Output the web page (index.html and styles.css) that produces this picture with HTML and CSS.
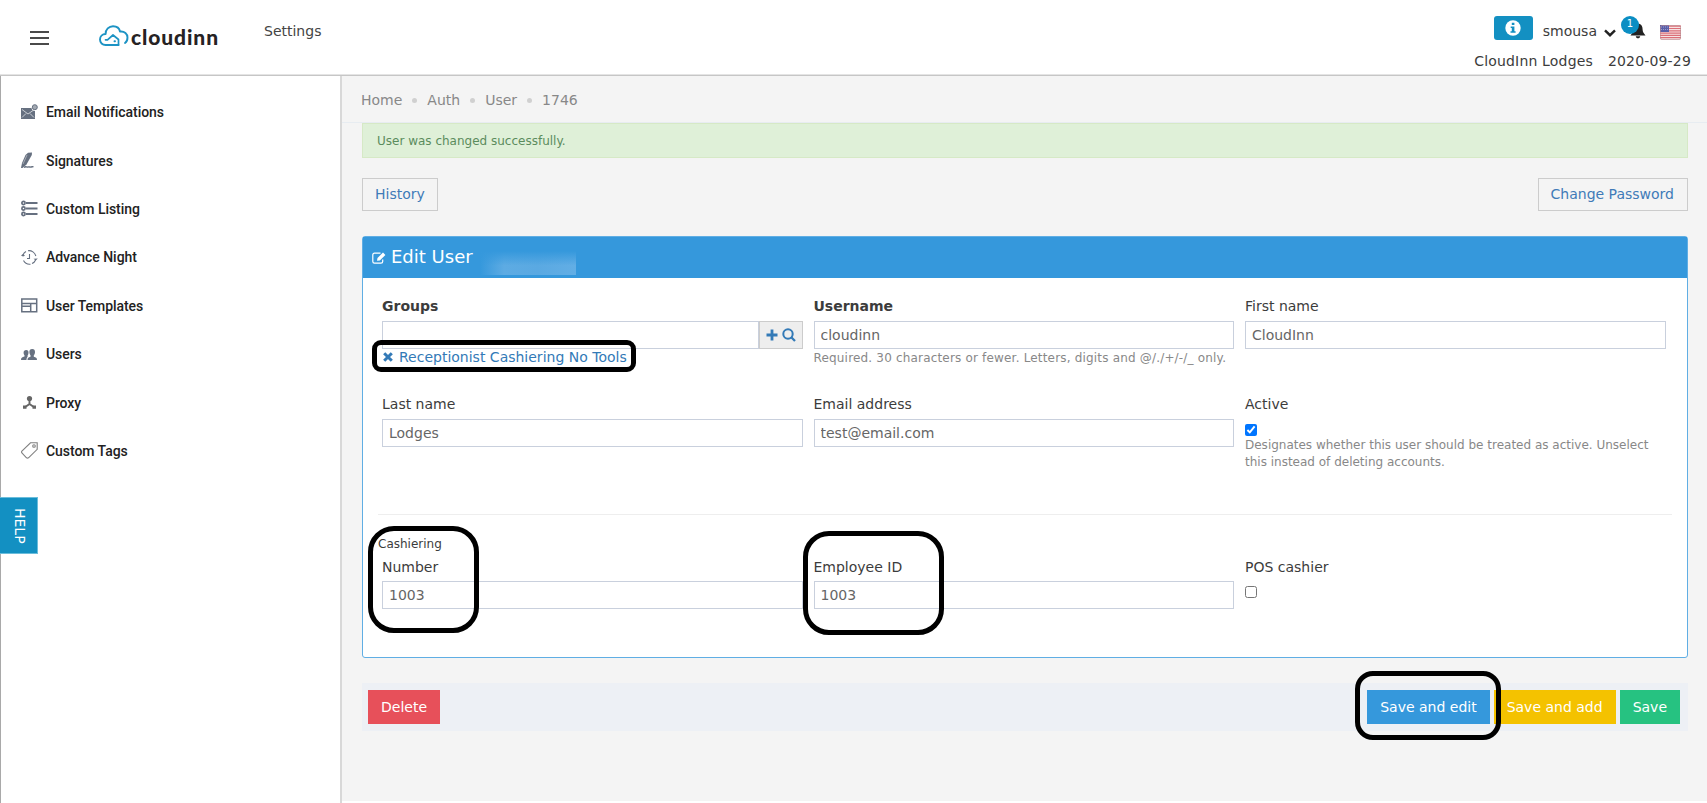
FILE: index.html
```
<!DOCTYPE html>
<html lang="en">
<head>
    <meta charset="utf-8">
    <title>Edit User</title>
    <link rel="stylesheet" href="styles.css">
</head>
<body>
    <header class="topbar">
        <svg class="menu-toggle" width="19" height="14" viewBox="0 0 19 14"><path d="M0 1h19M0 7h19M0 13h19" stroke="#4a4a4a" stroke-width="2"/></svg>
        <a class="logo" href="#">
            <svg width="30" height="22" viewBox="0 0 30 22" fill="none" stroke="#1d93c4" stroke-width="1.900" stroke-linecap="round" stroke-linejoin="round">
                <path d="M19.500 20H6.500C3.500 20 1 17.800 1 14.500C1 11.500 3.300 9 6.600 9C6.400 4.500 10 1.200 14 1.200C18 1.200 20.500 3.500 21 6.600C25.500 6 28.500 9 28.500 12.500C28.500 15.500 27.500 17 26 18"/>
                <path d="M6.500 14.800H8.500L14 10L19.500 14.500V20" stroke-width="1.700"/>
                <path d="M15.500 16.200h.5"/>
            </svg>
            <span class="logo-text">cloudinn</span>
        </a>
        <a class="settings" href="#">Settings</a>
        <div class="account">
            <div class="account-row">
                <span class="info-btn">
                    <svg width="16" height="16" viewBox="0 0 16 16"><circle cx="8" cy="8" r="7.700" fill="#fff"/><path d="M6.800 2.800h2.600v2.300H6.800zM5.700 6.500h3.700v4.700h1.200v1.600H5.500v-1.600h1.300V8.100H5.700z" fill="#1390c2"/></svg>
                </span>
                <span class="user">smousa</span>
                <svg class="caret" width="12" height="8" viewBox="0 0 12 8"><path d="M1 1.300L6 6.200L11 1.300" fill="none" stroke="#222" stroke-width="2.400"/></svg>
                <span class="bell">
                    <svg width="16" height="16" viewBox="0 0 16 16"><path d="M8 0.500C4.500 1 3.400 3.500 3.400 6.500C3.400 9 2 10.500 0.500 12.500H15.500C14 10.500 12.600 9 12.600 6.500C12.600 3.500 11.500 1 8 0.500zM5.800 13.300C6 16 10 16 10.200 13.300z" fill="#222"/></svg>
                    <span class="badge">1</span>
                </span>
                <svg class="flag" width="21" height="15" viewBox="0 0 21 15">
                    <rect width="21" height="15" rx="1.500" fill="#f6e3e3"/>
                    <path d="M0 1.200h21M0 3.500h21M0 5.800h21M0 8.100h21M0 10.400h21M0 12.700h21" stroke="#db6f78" stroke-width="1.200"/>
                    <rect width="9" height="7" fill="#5a5ea8"/>
                    <path d="M1 2h7M1 4.500h7" stroke="#9a9dce" stroke-width="1" stroke-dasharray="1 1"/>
                    <rect x=".5" y=".5" width="20" height="14" rx="1.500" fill="none" stroke="#b98a90" stroke-opacity=".6"/>
                </svg>
            </div>
            <div class="account-info"><span>CloudInn Lodges</span><span>2020-09-29</span></div>
        </div>
    </header>

    <div class="page">
        <nav class="sidebar">
            <a class="nav-item" href="#">
                <svg width="17" height="16" viewBox="0 0 17 16"><path d="M0 4h10.500a3.500 3.500 0 0 0 3.500 3v8H0z" fill="#667080"/><path d="M1 5.500l6 4.500l5-3.500M1 13.500l4-4M13 13.500l-4-4" fill="none" stroke="#d5d8dc" stroke-width=".9"/><circle cx="13.800" cy="3.200" r="2.500" fill="#a3a9b2" stroke="#667080"/></svg>
                <span>Email Notifications</span>
            </a>
            <a class="nav-item" href="#">
                <svg width="17" height="17" viewBox="0 0 17 17"><path d="M4.500 3L7 .8L11 .5L10.800 3L5.500 12.500L1.500 16H0L1 11z" fill="#667080"/><path d="M6 3L2 12" stroke="#b4b9c0" stroke-width=".8"/><path d="M3 15.500C5 13.800 5.500 15.500 7 15S9 15.500 10 15S12 15 12.500 14.500" fill="none" stroke="#667080" stroke-width="1.400"/></svg>
                <span>Signatures</span>
            </a>
            <a class="nav-item" href="#">
                <svg width="17" height="17" viewBox="0 0 17 17" fill="none" stroke="#667080" stroke-width="1.700"><circle cx="2.500" cy="3" r="1.600"/><circle cx="2.500" cy="8.500" r="1.600"/><circle cx="2.500" cy="14" r="1.600"/><path d="M5 3h11.500M5 8.500h11.500M5 14h11.500" stroke-width="1.900"/></svg>
                <span>Custom Listing</span>
            </a>
            <a class="nav-item" href="#">
                <svg width="17" height="17" viewBox="0 0 17 17" fill="none" stroke="#667080" stroke-width="1.100"><path d="M2 6A7 7 0 0 1 5 2.600M7 1.700A7 7 0 0 1 14.800 7M14.600 11A7 7 0 0 1 11 14.600M9.500 15.200A7 7 0 0 1 2.500 11.500"/><path d="M8.500 5v4.500H6"/><path d="M0 6.500l2-1.500l2 1.800l-2 .8zM12.500 9.800l2.300 1.700l2-1.900z" fill="#667080" stroke="none"/></svg>
                <span>Advance Night</span>
            </a>
            <a class="nav-item" href="#">
                <svg width="17" height="17" viewBox="0 0 17 17" fill="none" stroke="#667080" stroke-width="1.500"><path d="M.8 2h14.900v12.800H.8zM.8 6.500h14.900M9.700 6.500v8.300M.8 9.200h8.900"/></svg>
                <span>User Templates</span>
            </a>
            <a class="nav-item" href="#">
                <svg width="17" height="17" viewBox="0 0 17 17" fill="#667080"><path d="M11.200 3c2 0 2.800 1.300 2.800 3c0 1.600-.6 2.500-1.200 3.200v1.500c2 .5 3.200.8 3.200 3.300H6.500c0-2.500 1-2.800 3-3.300V9.200C9 8.500 8.400 7.600 8.400 6c0-1.700.8-3 2.800-3z"/><path d="M5.200 4C7 4 7.500 5 7.500 6.500S7 9 6.600 9.500v1.200c-.8.800-1.100 1.800-1.100 3.300H0c0-2.500 1-2.800 3.500-3.600V9.200C3 8.500 2.600 7.700 2.600 6.400C2.600 5 3.600 4 5.200 4z"/></svg>
                <span>Users</span>
            </a>
            <a class="nav-item" href="#">
                <svg width="17" height="17" viewBox="0 0 17 17"><circle cx="8.500" cy="4.500" r="2.600" fill="#666"/><path d="M8.500 6v4L3.500 13.500M8.500 10l5 3.500" fill="none" stroke="#666" stroke-width="1.900"/><path d="M2 11.500h3.500v3.300H2zM11.500 11.500H15v3.300h-3.500z" fill="#666"/></svg>
                <span>Proxy</span>
            </a>
            <a class="nav-item" href="#">
                <svg width="17" height="17" viewBox="0 0 17 17" fill="none" stroke="#808080" stroke-width="1.100"><path d="M9.500.8h6.700v6.500L7.500 15.800Q6.500 16.400 5.500 15.800L.9 11Q.2 10 .9 9z"/><circle cx="13" cy="4" r="1.300"/></svg>
                <span>Custom Tags</span>
            </a>
        </nav>

        <main class="content">
            <div class="breadcrumb">
                <a href="#">Home</a><i></i><a href="#">Auth</a><i></i><a href="#">User</a><i></i><a href="#">1746</a>
            </div>
            <div class="alert">User was changed successfully.</div>
            <div class="tools">
                <a class="btn-outline" href="#">History</a>
                <a class="btn-outline" href="#">Change Password</a>
            </div>

            <section class="panel">
                <div class="panel-title">
                    <svg width="14" height="12" viewBox="0 0 14 12" fill="none" stroke="#fff"><path d="M8.500 1.200H2.500Q.8 1.200.8 2.900V9.500Q.8 11.200 2.500 11.200H9Q10.700 11.200 10.700 9.500V7.500" stroke-width="1.200"/><path d="M5 8.800L5.500 6L11 .5L13.400 2.900L7.800 8.500z" fill="#fff" stroke="none"/></svg>
                    <h1>Edit User</h1>
                    <span class="blurred-name"></span>
                </div>
                <div class="panel-body">
                    <div class="form-row row-first">
                        <div class="field">
                            <label class="required">Groups</label>
                            <div class="input-group">
                                <input type="text">
                                <span class="addon">
                                    <svg width="12" height="12" viewBox="0 0 12 12"><path d="M6 .5v11M.5 6h11" stroke="#337ab7" stroke-width="2.800"/></svg>
                                    <svg width="14" height="14" viewBox="0 0 14 14"><circle cx="6" cy="6" r="4.700" fill="none" stroke="#337ab7" stroke-width="2"/><path d="M9.300 9.300l3.700 3.700" stroke="#337ab7" stroke-width="2.300"/></svg>
                                </span>
                            </div>
                            <a class="group-link" href="#"><svg width="10" height="10" viewBox="0 0 10 10"><path d="M1.200 1.200l7.600 7.600M8.800 1.200L1.200 8.800" stroke="#337ab7" stroke-width="3"/></svg>Receptionist Cashiering No Tools</a>
                            <span class="marker marker-group"></span>
                        </div>
                        <div class="field">
                            <label class="required">Username</label>
                            <input type="text" value="cloudinn">
                            <p class="help help-wide">Required. 30 characters or fewer. Letters, digits and @/./+/-/_ only.</p>
                        </div>
                        <div class="field">
                            <label>First name</label>
                            <input type="text" value="CloudInn">
                        </div>
                    </div>
                    <div class="form-row row-second">
                        <div class="field">
                            <label>Last name</label>
                            <input type="text" value="Lodges">
                        </div>
                        <div class="field">
                            <label>Email address</label>
                            <input type="text" value="test@email.com">
                        </div>
                        <div class="field">
                            <label>Active</label>
                            <input type="checkbox" checked>
                            <p class="help">Designates whether this user should be treated as active. Unselect this instead of deleting accounts.</p>
                        </div>
                    </div>
                    <hr>
                    <div class="legend">Cashiering</div>
                    <div class="form-row row-third">
                        <div class="field">
                            <label>Number</label>
                            <input type="text" value="1003">
                            <span class="marker marker-number"></span>
                        </div>
                        <div class="field">
                            <label>Employee ID</label>
                            <input type="text" value="1003">
                            <span class="marker marker-employee"></span>
                        </div>
                        <div class="field">
                            <label>POS cashier</label>
                            <input type="checkbox">
                        </div>
                    </div>
                </div>
            </section>

            <div class="actions">
                <button class="btn btn-delete">Delete</button>
                <div class="save-buttons">
                    <button class="btn btn-edit">Save and edit</button>
                    <button class="btn btn-add">Save and add</button>
                    <button class="btn btn-save">Save</button>
                    <span class="marker marker-save"></span>
                </div>
            </div>
        </main>
    </div>
    <a class="help-tab" href="#">HELP</a>
</body>
</html>
```
FILE: styles.css
```
* {
    box-sizing: border-box;
}
body {
    margin: 0;
    height: 803px;
    overflow: hidden;
    display: flex;
    flex-direction: column;
    background: #f4f4f4;
    color: #3c3c3c;
    font: 14px/20px Verdana, "DejaVu Sans", sans-serif;
}
a {
    color: inherit;
    text-decoration: none;
}
svg {
    flex: none;
    display: block;
}

/* top bar */
.topbar {
    height: 76px;
    flex: none;
    display: flex;
    align-items: flex-start;
    background: #fff;
    border-bottom: 1px solid #c6c6c6;
    box-shadow: inset 0 -1px #e4e4e4;
}
.menu-toggle {
    margin: 31px 0 0 30px;
}
.logo {
    display: flex;
    width: 122px;
    margin: 25px 0 0 50px;
}
.logo-text {
    margin: 1px 0 0 2px;
    font: 900 21px/22px Lato, sans-serif;
    letter-spacing: 0.9px;
    color: #262223;
}
.settings {
    margin: 21px 0 0 43px;
    color: #444;
}
.account {
    margin: 15px 16px 0 auto;
}
.account-row {
    display: flex;
    height: 36px;
    align-items: flex-start;
    justify-content: flex-end;
}
.info-btn {
    width: 39px;
    height: 24px;
    margin-top: 1px;
    display: flex;
    align-items: center;
    justify-content: center;
    background: #1390c2;
    border-radius: 3px;
}
.user {
    margin: 6px 0 0 10px;
}
.caret {
    margin: 14px 0 0 7px;
}
.bell {
    position: relative;
    margin: 8px 0 0 14px;
}
.badge {
    position: absolute;
    left: -9px;
    top: -7px;
    width: 18px;
    height: 18px;
    border-radius: 50%;
    background: #0b8ec3;
    color: #fff;
    font-size: 10px;
    line-height: 16px;
    text-align: center;
}
.flag {
    margin: 10px 10px 0 14px;
}
.account-info {
    display: flex;
    gap: 15px;
    letter-spacing: 0.17px;
}

.page {
    flex: 1;
    display: flex;
}

/* sidebar */
.sidebar {
    width: 342px;
    flex: none;
    padding-top: 12px;
    background: #fff;
    border-left: 1px solid #a9a9a9;
    border-right: 2px solid #d8d8d8;
}
.nav-item {
    display: flex;
    align-items: center;
    height: 48.400px;
    padding-left: 20px;
    gap: 8px;
    font: 500 14px/20px Roboto, sans-serif;
    letter-spacing: -0.05px;
    color: #222;
}
.help-tab {
    position: absolute;
    left: 0;
    top: 497px;
    width: 38px;
    height: 57px;
    padding-right: 0;
    writing-mode: vertical-rl;
    text-align: center;
    line-height: 34px;
    font-size: 14px;
    background: #1390c2;
    border: 1px solid #6bbddb;
    border-left: 0;
    color: #fff;
}

/* main column */
.content {
    flex: 1;
    padding: 0 19px 0 20px;
    border-bottom: 2px solid #fff;
}
.breadcrumb {
    display: flex;
    align-items: center;
    height: 47px;
    margin: 0 -19px 0 -20px;
    padding: 2px 20px 0 19px;
    border-bottom: 1px solid #e7ecf1;
    color: #888;
}
.breadcrumb i {
    width: 5px;
    height: 5px;
    margin: 0 10px;
    border-radius: 50%;
    background: #d0d0d0;
}
.alert {
    height: 35px;
    padding: 0 14px;
    background: #dff0d8;
    border: 1px solid #d6e9c6;
    color: #5b8c5d;
    font-size: 12px;
    line-height: 34px;
}
.tools {
    display: flex;
    justify-content: space-between;
    margin-top: 20px;
}
.btn-outline {
    height: 33px;
    padding: 0 13px 0 12px;
    border: 1px solid #ccc;
    color: #3f7bb8;
    line-height: 31px;
}
.btn-outline:first-child {
    padding-right: 12px;
}
.panel {
    height: 422px;
    margin-top: 25px;
    background: #fff;
    border: 1px solid #60aee4;
    border-radius: 3px;
}
.panel-title {
    display: flex;
    align-items: center;
    height: 41px;
    padding-left: 9px;
    background: #3598dc;
    color: #fff;
}
.panel-title h1 {
    margin: 0 0 1px 5px;
    font-size: 18px;
    font-weight: normal;
}
.blurred-name {
    width: 96px;
    height: 24px;
    margin: 10px 0 0 7px;
    background: linear-gradient(#3598dc, transparent 60%), linear-gradient(90deg, #3598dc, #5dabe3 25%, #5aa9e2 60%, #62aee5);
}
.panel-body {
    padding: 18px 15px 0;
}
.form-row {
    display: grid;
    grid-template-columns: repeat(3, 420.500px);
    column-gap: 11px;
    padding-left: 4px;
}
.row-first {
    height: 98px;
}
.row-second {
    height: 120px;
}
.field {
    position: relative;
}
.field label {
    display: block;
    height: 25px;
}
.row-third .field label {
    height: 24px;
}
.field .required {
    font-weight: bold;
}
input[type=text] {
    display: block;
    width: 100%;
    height: 28px;
    padding: 0 6px;
    border: 1px solid #c9d0dd;
    background: #fff;
    color: #666;
    font: inherit;
}
input[type=checkbox] {
    display: block;
    width: 12px;
    height: 12px;
    margin: 5px 0 0;
}
.input-group {
    display: flex;
}
.addon {
    flex: none;
    width: 44px;
    display: flex;
    align-items: center;
    justify-content: center;
    gap: 4px;
    background: #eee;
    border: 1px solid #ccc;
}
.input-group + .group-link {
    display: flex;
    align-items: center;
    gap: 6px;
    height: 15px;
    padding-left: 1px;
    color: #337ab7;
}
.help {
    margin: 1px 0 0;
    color: #888;
    font-size: 12px;
    line-height: 17px;
}
.help-wide {
    letter-spacing: 0.18px;
}
hr {
    height: 1px;
    margin: 0;
    border: 0;
    background: #eee;
}
.legend {
    margin-top: 20px;
    height: 22px;
    font-size: 12px;
    line-height: 19px;
}
.actions {
    display: flex;
    justify-content: space-between;
    height: 48px;
    margin-top: 25px;
    padding: 7px 8px 7px 6px;
    background: #edf0f5;
}
.save-buttons {
    position: relative;
    display: flex;
    gap: 4px;
}
.btn {
    height: 34px;
    padding: 0 13px;
    border: 0;
    color: #fff;
    font: inherit;
}
.btn-delete {
    background: #e7505a;
}
.btn-edit {
    background: #3598dc;
}
.btn-add {
    background: #f4c200;
}
.btn-save {
    background: #26c281;
}

/* highlight frames */
.marker {
    position: absolute;
    border: 5px solid #000;
}
.marker-group {
    left: -10px;
    top: 44px;
    width: 264px;
    height: 32px;
    border-radius: 9px;
}
.marker-number {
    left: -14px;
    top: -31px;
    width: 111px;
    height: 107px;
    border-radius: 26px;
}
.marker-employee {
    left: -11px;
    top: -26px;
    width: 141px;
    height: 104px;
    border-radius: 26px;
}
.marker-save {
    left: -12px;
    top: -19px;
    width: 146px;
    height: 69px;
    border-radius: 18px;
}
```
